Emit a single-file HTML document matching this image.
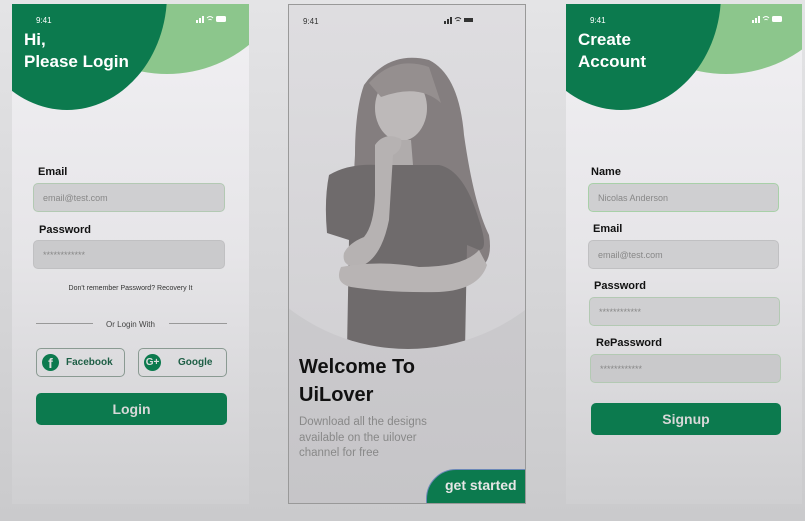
<!DOCTYPE html>
<html><head><meta charset="utf-8"><style>
*{margin:0;padding:0;box-sizing:border-box}
body{width:805px;height:521px;overflow:hidden;background:linear-gradient(180deg,#e4e4e6,#cacacc);font-family:"Liberation Sans",sans-serif;position:relative}
.ph{position:absolute;top:4px;height:500px;overflow:hidden;background:linear-gradient(180deg,#f1f0f3 0%,#e6e5e8 50%,#cfcfd1 100%)}
.abs{position:absolute}
.dark{position:absolute;left:-45px;top:-126px;width:200px;height:232px;border-radius:50%;background:#0c7a4e}
.light{position:absolute;left:25px;top:-190px;width:260px;height:260px;border-radius:50%;background:#8cc68c}
.time{position:absolute;top:12px;font-size:8px;color:#fff}
.h{position:absolute;color:#fff;font-weight:bold;font-size:17px;line-height:22px}
.lbl{position:absolute;font-weight:bold;font-size:11px;color:#111}
.inp{position:absolute;height:29px;background:#cfcfd1;border:1px solid #b3c9b3;border-radius:5px;font-size:9px;color:#888;padding:9px 0 0 9px}
.btn{position:absolute;background:#0c7a4e;border-radius:5px;color:#d8d8d8;font-weight:bold;font-size:14px;text-align:center}
.sb{position:absolute;top:11px;width:30px;height:8px}
</style></head><body>

<!-- LEFT -->
<div class="ph" style="left:12px;width:237px">
  <div class="light"></div><div class="dark"></div>
  <div class="time" style="left:24px">9:41</div>
  <svg class="sb" style="left:184px" viewBox="0 0 30 8"><rect x="0" y="5" width="2" height="3" fill="#fff"/><rect x="3" y="3" width="2" height="5" fill="#fff"/><rect x="6" y="1" width="2" height="7" fill="#fff"/><path d="M11 3 Q14 0 17 3 M12.5 5 Q14 3.5 15.5 5" stroke="#fff" fill="none"/><rect x="20" y="1" width="10" height="6" rx="1.5" fill="#fff"/></svg>
  <div class="h" style="left:12px;top:25px">Hi,<br>Please Login</div>
  <div class="lbl" style="left:26px;top:162px">Email</div>
  <div class="inp" style="left:21px;top:179px;width:192px">email@test.com</div>
  <div class="lbl" style="left:27px;top:220px">Password</div>
  <div class="inp" style="left:21px;top:236px;width:192px;background:#cacacc;border-color:#c0c0c2">************</div>
  <div class="abs" style="left:0;width:237px;top:281px;text-align:center;font-size:7px;color:#333">Don't remember Password? Recovery It</div>
  <div class="abs" style="left:24px;top:319px;width:57px;border-top:1px solid #999"></div>
  <div class="abs" style="left:157px;top:319px;width:58px;border-top:1px solid #999"></div>
  <div class="abs" style="left:0;width:237px;top:316px;text-align:center;font-size:8px;color:#444">Or Login With</div>
  <div class="abs" style="left:24px;top:344px;width:89px;height:29px;border:1px solid #8a9a92;border-radius:5px">
    <div class="abs" style="left:5px;top:5px;width:17px;height:17px;border-radius:50%;background:#0c7a4e;color:#ddd;font-weight:bold;font-size:14px;text-align:center;line-height:19px">f</div>
    <div class="abs" style="left:29px;top:8px;font-size:10px;font-weight:bold;color:#1d5e45">Facebook</div>
  </div>
  <div class="abs" style="left:126px;top:344px;width:89px;height:29px;border:1px solid #8a9a92;border-radius:5px">
    <div class="abs" style="left:5px;top:5px;width:17px;height:17px;border-radius:50%;background:#0c7a4e;color:#ddd;font-weight:bold;font-size:10px;text-align:center;line-height:17px">G+</div>
    <div class="abs" style="left:39px;top:8px;font-size:10px;font-weight:bold;color:#1d5e45">Google</div>
  </div>
  <div class="btn" style="left:24px;top:389px;width:191px;height:32px;line-height:32px">Login</div>
</div>

<!-- MIDDLE -->
<div class="ph" style="left:288px;width:238px;border:1px solid #999;background:linear-gradient(180deg,#d2d1d4,#c6c5c8)">
  <div class="abs" style="left:-76px;top:-46px;width:390px;height:390px;border-radius:50%;background:linear-gradient(180deg,#e0dfe2,#d2d1d4)"></div>
  <div class="time" style="left:14px;color:#333">9:41</div>
  <svg class="sb" style="left:155px" viewBox="0 0 30 8"><rect x="0" y="5" width="2" height="3" fill="#333"/><rect x="3" y="3" width="2" height="5" fill="#333"/><rect x="6" y="1" width="2" height="7" fill="#333"/><path d="M11 3 Q14 0 17 3 M12.5 5 Q14 3.5 15.5 5" stroke="#333" fill="none"/><rect x="20" y="2" width="9" height="4" fill="#333"/></svg>
  <svg class="abs" style="left:0;top:0" width="238" height="345" viewBox="0 0 238 345">
    <defs><clipPath id="c"><circle cx="119" cy="149" r="195"/></clipPath></defs>
    <g clip-path="url(#c)">
      <path d="M75 80 Q100 45 140 55 Q170 70 175 130 Q185 200 200 230 Q205 260 185 265 L80 250 Q62 200 66 150 Q66 105 75 80 Z" fill="#847e7f"/>
      <path d="M40 170 Q60 158 90 160 L150 160 Q175 165 190 215 Q200 245 190 245 L178 240 L176 345 L58 345 L60 235 L38 228 Q35 195 40 170 Z" fill="#6f6b6c"/>
      <ellipse cx="112" cy="103" rx="26" ry="33" fill="#bdb9b9"/>
      <path d="M102 135 L122 135 L124 160 L100 160Z" fill="#b0acac"/>
      <path d="M86 140 Q96 126 112 134 Q114 145 104 150 L100 215 Q92 255 70 262 Q52 262 55 248 Q60 238 75 232 Q85 220 86 190 Z" fill="#b6b2b2"/>
      <path d="M52 262 Q90 255 130 262 Q175 262 190 245 L198 260 Q190 285 150 287 Q100 288 62 282 Q45 278 52 262Z" fill="#b8b4b4"/>
      <path d="M80 78 Q105 50 140 62 L152 98 Q130 78 92 92 Z" fill="#958f8f"/>
    </g>
  </svg>
  <div class="abs" style="left:10px;top:348px;font-weight:bold;font-size:20px;line-height:28px;color:#111">Welcome To<br>UiLover</div>
  <div class="abs" style="left:10px;top:410px;font-size:11.5px;line-height:15.5px;color:#888">Download all the designs<br>available on the uilover<br>channel for free</div>
  <div class="abs" style="left:137px;top:464px;width:101px;height:36px;background:#0c7a4e;border-radius:30px 0 0 0;color:#e6e6e6;font-weight:bold;font-size:14px;padding:7px 0 0 18px;border:1px solid #6b88b8">get started</div>
</div>

<!-- RIGHT -->
<div class="ph" style="left:566px;width:236px">
  <div class="light" style="left:30px"></div><div class="dark"></div>
  <div class="time" style="left:24px">9:41</div>
  <svg class="sb" style="left:186px" viewBox="0 0 30 8"><rect x="0" y="5" width="2" height="3" fill="#fff"/><rect x="3" y="3" width="2" height="5" fill="#fff"/><rect x="6" y="1" width="2" height="7" fill="#fff"/><path d="M11 3 Q14 0 17 3 M12.5 5 Q14 3.5 15.5 5" stroke="#fff" fill="none"/><rect x="20" y="1" width="10" height="6" rx="1.5" fill="#fff"/></svg>
  <div class="h" style="left:12px;top:25px">Create<br>Account</div>
  <div class="lbl" style="left:25px;top:162px">Name</div>
  <div class="inp" style="left:22px;top:179px;width:191px;border-color:#a8d0a8">Nicolas Anderson</div>
  <div class="lbl" style="left:27px;top:219px">Email</div>
  <div class="inp" style="left:22px;top:236px;width:191px;border-color:#c0c0c2">email@test.com</div>
  <div class="lbl" style="left:28px;top:276px">Password</div>
  <div class="inp" style="left:23px;top:293px;width:191px">************</div>
  <div class="lbl" style="left:30px;top:333px">RePassword</div>
  <div class="inp" style="left:24px;top:350px;width:191px;background:#c9c9cb">************</div>
  <div class="btn" style="left:25px;top:399px;width:190px;height:32px;line-height:32px">Signup</div>
</div>
</body></html>
